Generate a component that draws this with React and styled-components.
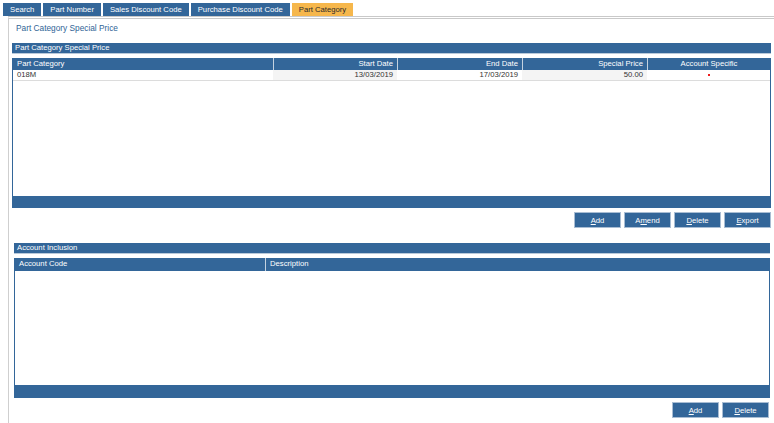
import React from 'react'
import styled, {createGlobalStyle} from 'styled-components'

const BLUE = '#336699'
const FONT = `"Liberation Sans", Arial, sans-serif`

const GlobalStyle = createGlobalStyle`
  html, body {
    margin: 0;
    padding: 0;
    background: #ffffff;
    font-family: ${FONT};
  }
`

const tabs = ['Search', 'Part Number', 'Sales Discount Code', 'Purchase Discount Code', 'Part Category']

const priceColumns = [
  {label: 'Part Category', align: 'left'},
  {label: 'Start Date', align: 'right'},
  {label: 'End Date', align: 'right'},
  {label: 'Special Price', align: 'right'},
  {label: 'Account Specific', align: 'center'},
]

const priceRows = [
  {category: '018M', start: '13/03/2019', end: '17/03/2019', price: '50.00', specific: true},
]

const App = () => {
  return (
    <Page>
      <GlobalStyle />
      <TabBar>
        {tabs.map((t, i) => (
          <Tab key={t} $active={i === tabs.length - 1}>{t}</Tab>
        ))}
      </TabBar>

      <Panel>
        <Title>Part Category Special Price</Title>

        <SectionBar>Part Category Special Price</SectionBar>
        <Grid $height={150}>
          <HeaderRow $cols="260px 124px 125px 125px 1fr" $h={12}>
            {priceColumns.map(c => (
              <HeaderCell key={c.label} $align={c.align}>{c.label}</HeaderCell>
            ))}
          </HeaderRow>
          <Body>
            {priceRows.map(r => (
              <DataRow key={r.category} $cols="260px 124px 125px 125px 1fr">
                <Cell>{r.category}</Cell>
                <Cell $align="right" $shade>{r.start}</Cell>
                <Cell $align="right">{r.end}</Cell>
                <Cell $align="right" $shade>{r.price}</Cell>
                <Cell $align="center">{r.specific && <Flag />}</Cell>
              </DataRow>
            ))}
          </Body>
          <Footer $h={12} />
        </Grid>
        <ButtonRow>
          <Button><u>A</u>dd</Button>
          <Button>A<u>m</u>end</Button>
          <Button><u>D</u>elete</Button>
          <Button><u>E</u>xport</Button>
        </ButtonRow>

        <Inset>
          <SectionBar $gap={15}>Account Inclusion</SectionBar>
          <Grid $height={140}>
            <HeaderRow $cols="250px 1fr" $h={13}>
              <HeaderCell>Account Code</HeaderCell>
              <HeaderCell>Description</HeaderCell>
            </HeaderRow>
            <Body />
            <Footer $h={13} />
          </Grid>
          <ButtonRow $right={1}>
            <Button><u>A</u>dd</Button>
            <Button><u>D</u>elete</Button>
          </ButtonRow>
        </Inset>
      </Panel>
    </Page>
  )
}

export default App

const Page = styled.div`
  width: 774px;
  height: 423px;
  padding-top: 3px;
  box-sizing: border-box;
  display: flex;
  flex-direction: column;
  overflow: hidden;
`

const TabBar = styled.div`
  display: flex;
  gap: 2px;
  margin-left: 3px;
  height: 13px;
`

const Tab = styled.div`
  padding: 0 7px;
  height: 13px;
  line-height: 13px;
  font-size: 7.7px;
  color: ${p => (p.$active ? '#2b2b2b' : '#ffffff')};
  background: ${p => (p.$active ? '#f6b74c' : BLUE)};
  white-space: nowrap;
`

const Panel = styled.div`
  flex: 1;
  margin-left: 8px;
  border-top: 3px double #c9c9c9;
  border-left: 1px solid #cfcfcf;
  padding: 0 3px 0 3px;
  display: flex;
  flex-direction: column;
`

const Title = styled.div`
  margin-top: 3px;
  height: 12px;
  line-height: 12px;
  padding-left: 4px;
  font-size: 8.3px;
  color: #2f6496;
`

const SectionBar = styled.div`
  margin-top: ${p => p.$gap || 9}px;
  height: 10px;
  line-height: 10px;
  padding-left: 3px;
  background: ${BLUE};
  border-bottom: 1px solid #b9c9da;
  color: #ffffff;
  font-size: 7.7px;
`

const Grid = styled.div`
  margin-top: 4px;
  height: ${p => p.$height}px;
  box-sizing: border-box;
  border: 1px solid ${BLUE};
  border-top: none;
  border-bottom: none;
  display: flex;
  flex-direction: column;
`

const HeaderRow = styled.div`
  display: grid;
  grid-template-columns: ${p => p.$cols};
  height: ${p => p.$h}px;
  background: ${BLUE};
`

const HeaderCell = styled.div`
  padding: 0 4px;
  line-height: ${p => (p.$h ? p.$h : 12)}px;
  color: #ffffff;
  font-size: 7.7px;
  text-align: ${p => p.$align || 'left'};
  white-space: nowrap;
  & + & {
    border-left: 1px solid #c4d2e0;
  }
`

const Body = styled.div`
  flex: 1;
  background: #ffffff;
`

const DataRow = styled.div`
  display: grid;
  grid-template-columns: ${p => p.$cols};
  height: 10px;
  border-bottom: 1px solid #dcdcdc;
`

const Cell = styled.div`
  padding: 0 4px;
  line-height: 10px;
  font-size: 7.7px;
  color: #333333;
  text-align: ${p => p.$align || 'left'};
  background: ${p => (p.$shade ? '#f4f4f4' : '#ffffff')};
  white-space: nowrap;
`

const Flag = styled.span`
  display: inline-block;
  width: 2px;
  height: 2px;
  background: #ee1c1c;
  vertical-align: middle;
`

const Footer = styled.div`
  height: ${p => p.$h}px;
  background: ${BLUE};
`

const ButtonRow = styled.div`
  margin-top: 4px;
  margin-right: ${p => p.$right || 0}px;
  display: flex;
  justify-content: flex-end;
  gap: 3px;
`

const Button = styled.button`
  width: 47px;
  height: 16px;
  padding: 0;
  margin: 0;
  background: ${BLUE};
  border: 1px solid #a9bdd3;
  color: #ffffff;
  font-family: ${FONT};
  font-size: 7.7px;
  cursor: pointer;
  u {
    text-decoration: underline;
  }
`

const Inset = styled.div`
  display: flex;
  flex-direction: column;
  margin: 0 1px 0 2px;
`
